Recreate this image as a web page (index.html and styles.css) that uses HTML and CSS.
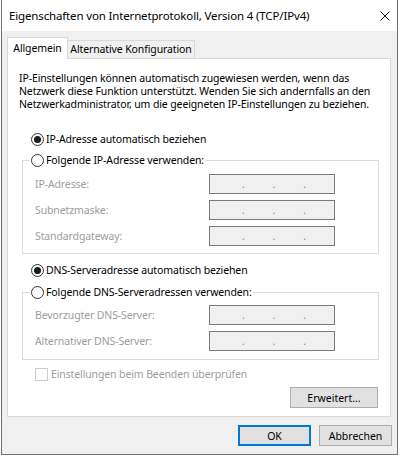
FILE: index.html
```html
<!DOCTYPE html>
<html lang="de">
<head>
<meta charset="utf-8">
<title>Eigenschaften von Internetprotokoll, Version 4 (TCP/IPv4)</title>
<link rel="stylesheet" href="styles.css">
</head>
<body>
<div class="window">
  <div class="titlebar">
    <span class="title">Eigenschaften von Internetprotokoll, Version 4 (TCP/IPv4)</span>
    <svg class="close" viewBox="0 0 10 10" width="10" height="10"><path d="M0.5 0.5 L9.5 9.5 M9.5 0.5 L0.5 9.5" stroke="#111" stroke-width="1" fill="none"/></svg>
  </div>
  <div class="client">
    <div class="tabs">
      <div class="tab active">Allgemein</div>
      <div class="tab alt">Alternative Konfiguration</div>
    </div>
    <div class="panel">
      <p class="intro">IP-Einstellungen können automatisch zugewiesen werden, wenn das<br>Netzwerk diese Funktion unterstützt. Wenden Sie sich andernfalls an den<br>Netzwerkadministrator, um die geeigneten IP-Einstellungen zu beziehen.</p>

      <label class="radio-row first"><input type="radio" name="ip" checked><span>IP-Adresse automatisch beziehen</span></label>
      <fieldset class="group group-ip">
        <legend><label class="radio-row"><input type="radio" name="ip"><span>Folgende IP-Adresse verwenden:</span></label></legend>
        <div class="field-row"><span class="lbl">IP-Adresse:</span><div class="ip"><span>.</span><span>.</span><span>.</span></div></div>
        <div class="field-row"><span class="lbl">Subnetzmaske:</span><div class="ip"><span>.</span><span>.</span><span>.</span></div></div>
        <div class="field-row"><span class="lbl">Standardgateway:</span><div class="ip"><span>.</span><span>.</span><span>.</span></div></div>
      </fieldset>

      <label class="radio-row dns-auto"><input type="radio" name="dns" checked><span>DNS-Serveradresse automatisch beziehen</span></label>
      <fieldset class="group group-dns">
        <legend><label class="radio-row"><input type="radio" name="dns"><span>Folgende DNS-Serveradressen verwenden:</span></label></legend>
        <div class="field-row"><span class="lbl">Bevorzugter DNS-Server:</span><div class="ip"><span>.</span><span>.</span><span>.</span></div></div>
        <div class="field-row"><span class="lbl">Alternativer DNS-Server:</span><div class="ip"><span>.</span><span>.</span><span>.</span></div></div>
      </fieldset>

      <label class="check-row"><input type="checkbox" disabled><span>Einstellungen beim Beenden überprüfen</span></label>
      <div class="adv-row"><button class="btn adv" type="button">Erweitert...</button></div>
    </div>
    <div class="footer">
      <button class="btn default" type="button">OK</button>
      <button class="btn" type="button">Abbrechen</button>
    </div>
  </div>
</div>
</body>
</html>
```

FILE: styles.css
```css
html, body {
  margin: 0;
  background: #ffffff;
}
body {
  font-family: "Noto Sans", "Open Sans", sans-serif;
  font-size: 10.5px;
  letter-spacing: -0.12px;
  color: #000;
}
.window {
  margin-left: 1px;
  width: 397px;
  height: 455px;
  box-sizing: border-box;
  border: 1px solid #707070;
  border-top: none;
  background: #f0f0f0;
  display: flex;
  flex-direction: column;
}
.titlebar {
  height: 31px;
  flex: none;
  background: #fff;
  display: flex;
  align-items: center;
  padding: 0 7px 0 7px;
}
.title {
  flex: 1;
  font-size: 11.5px;
  letter-spacing: -0.15px;
  white-space: nowrap;
}
.close {
  display: block;
  flex: none;
}
.client {
  flex: 1;
  padding: 6px 6px 0 5px;
  display: flex;
  flex-direction: column;
}
.tabs {
  display: flex;
  align-items: flex-end;
  height: 21px;
}
.tab {
  box-sizing: border-box;
  height: 18px;
  border: 1px solid #d9d9d9;
  border-bottom: none;
  background: #f0f0f0;
  text-align: center;
  line-height: 17px;
  white-space: nowrap;
}
.tab.active {
  width: 61px;
  height: 22px;
  margin-bottom: -1px;
  background: #fff;
  line-height: 20px;
  position: relative;
  z-index: 1;
}
.tab.alt {
  width: 127px;
  border-left: none;
}
.panel {
  box-sizing: border-box;
  width: 384px;
  height: 359px;
  background: #fff;
  border: 1px solid #d9d9d9;
  display: flex;
  flex-direction: column;
  align-items: flex-start;
}
.intro {
  margin: 13px 0 0 11px;
  line-height: 13px;
  white-space: nowrap;
}
.radio-row {
  display: flex;
  align-items: center;
  height: 16px;
  white-space: nowrap;
}
.radio-row.first {
  margin: 20px 0 0 23px;
}
.radio-row.dns-auto {
  margin: 8px 0 0 23px;
}
input[type="radio"] {
  appearance: none;
  -webkit-appearance: none;
  box-sizing: border-box;
  width: 13px;
  height: 13px;
  margin: 0 2px 0 0;
  border: 1px solid #333;
  border-radius: 50%;
  background: #fff;
  display: grid;
  place-content: center;
}
input[type="radio"]:checked::before {
  content: "";
  width: 7px;
  height: 7px;
  border-radius: 50%;
  background: #1b1b1b;
}
.group {
  box-sizing: border-box;
  width: 357px;
  margin: 5px 0 0 14px;
  border: 1px solid #dcdcdc;
  padding: 6px 0 7px 12px;
  min-width: 0;
}
.group-dns {
  margin-top: 6px;
  padding-top: 5px;
  padding-bottom: 8px;
}
.group legend {
  margin-left: -5px;
  padding: 0 1px;
}
.field-row {
  display: flex;
  align-items: center;
  height: 20px;
}
.field-row + .field-row {
  margin-top: 6px;
}
.lbl {
  width: 174px;
  color: #9d9d9d;
  white-space: nowrap;
}
.ip {
  box-sizing: border-box;
  width: 126px;
  height: 20px;
  border: 1px solid #7a7a7a;
  background: #f0f0f0;
  display: flex;
  align-items: center;
  padding-left: 32px;
  gap: 28px;
  color: #8a8a8a;
  font-size: 10px;
}
.check-row {
  display: flex;
  align-items: center;
  height: 16px;
  margin: 6px 0 0 27px;
  color: #9d9d9d;
  white-space: nowrap;
}
input[type="checkbox"] {
  appearance: none;
  -webkit-appearance: none;
  box-sizing: border-box;
  width: 13px;
  height: 13px;
  margin: 0 3px 0 0;
  border: 1px solid #cccccc;
  background: #fff;
}
.adv-row {
  align-self: stretch;
  display: flex;
  justify-content: flex-end;
  padding-right: 12px;
  margin-top: 5px;
}
.btn {
  box-sizing: border-box;
  height: 21px;
  padding: 0;
  background: #e1e1e1;
  border: 1px solid #adadad;
  font: inherit;
  color: #000;
}
.btn.adv {
  width: 88px;
}
.footer {
  display: flex;
  justify-content: flex-end;
  gap: 8px;
  margin: 8px -1px 0 0;
}
.footer .btn {
  width: 73px;
}
.btn.default {
  border: 2px solid #0078d7;
}
```
